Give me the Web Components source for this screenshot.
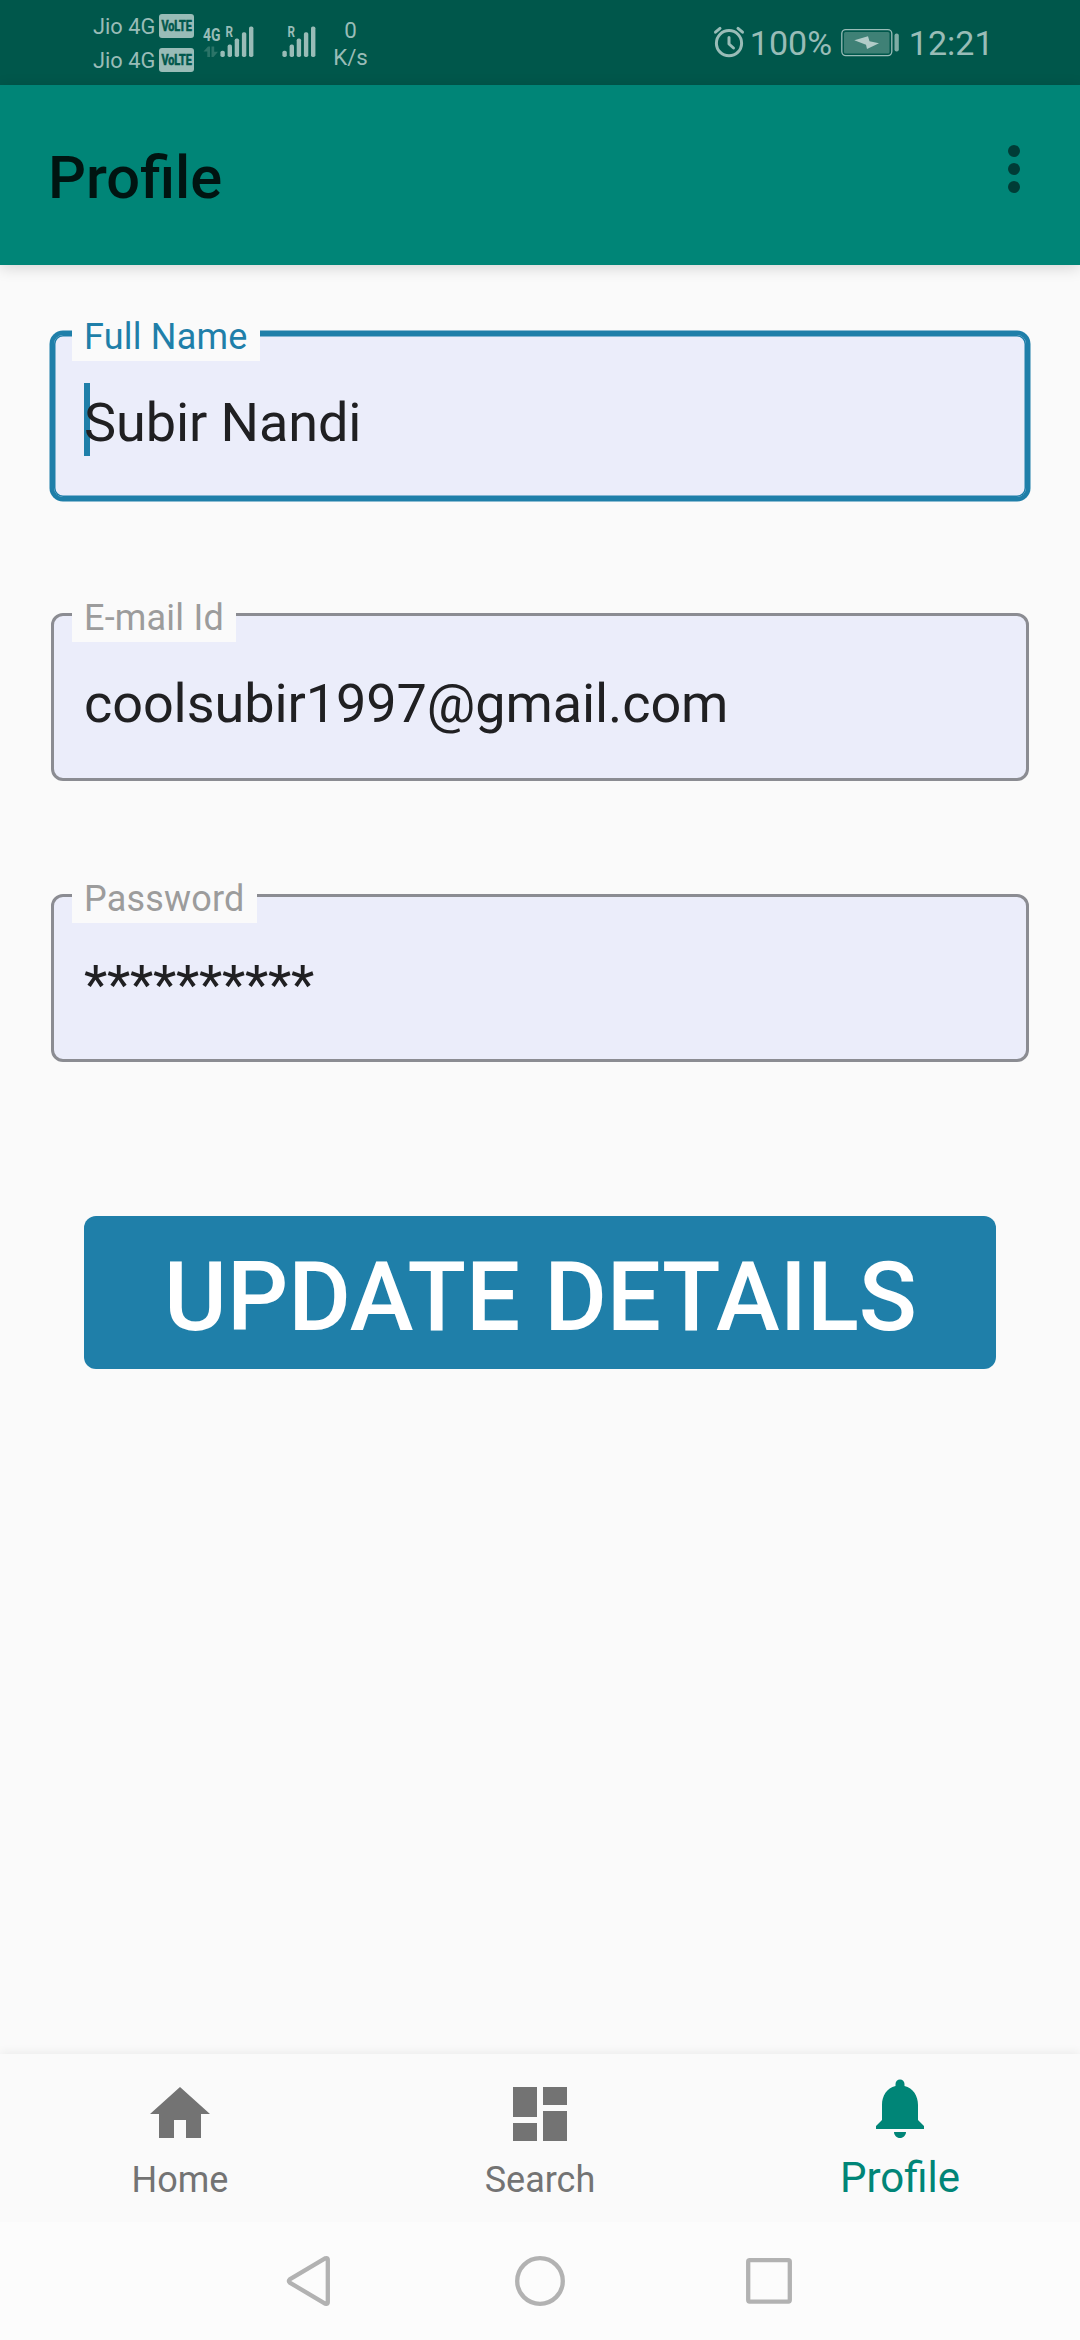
<!DOCTYPE html>
<html lang="en">
<head>
<meta charset="utf-8">
<title>Profile</title>
<style>
html,body{margin:0;padding:0}
body{width:1080px;height:2340px;overflow:hidden;background:#fafafa;font-family:Roboto,sans-serif}
</style>
</head>
<body>
<profile-screen></profile-screen>
<script>
const define = (name, html, setup) => customElements.define(name, class extends HTMLElement {
  connectedCallback() {
    if (this.shadowRoot) return;
    const root = this.attachShadow({ mode: 'open' });
    const t = document.createElement('template');
    t.innerHTML = html;
    root.append(t.content.cloneNode(true));
    if (setup) setup(this, root);
  }
});

define('signal-bars', `
<style>:host{display:block;height:85px}svg{display:block;overflow:visible}</style>
<svg width="36" height="85" viewBox="0 0 36 85" fill="#99bcb7">
  <text x="5.5" y="37" font-family="Roboto" font-weight="700" font-size="14.5" textLength="7.5" lengthAdjust="spacingAndGlyphs">R</text>
  <rect x="0.4" y="50.8" width="4.4" height="6.2" rx="1.8"/><rect x="7.6" y="44.6" width="4.4" height="12.4" rx="1.8"/>
  <rect x="14.7" y="38.5" width="4.4" height="18.5" rx="1.8"/><rect x="21.9" y="32.3" width="4.4" height="24.7" rx="1.8"/>
  <rect x="29" y="26.5" width="4.4" height="30.5" rx="1.8"/>
</svg>`);

define('volte-badge', `
<style>:host{display:block}svg{display:block;overflow:visible}</style>
<svg width="35" height="24" viewBox="0 0 35 24">
  <rect width="35" height="24" rx="3" fill="#99bcb7"/>
  <text x="2.4" y="17.2" fill="#00574b" stroke="#00574b" stroke-width=".7" font-family="Roboto" font-weight="700" font-size="15.4" textLength="30.4" lengthAdjust="spacingAndGlyphs">VoLTE</text>
</svg>`);

define('status-bar', `
<style>
:host{display:flex;justify-content:space-between;height:85px;background:#00574b;color:#99bcb7;box-sizing:border-box;padding:0 86.5px 0 93px}
svg{display:block;flex:none;overflow:visible}
.left,.right{display:flex}
.carriers{padding-top:9px}
.row{display:flex;align-items:center;height:34px;font-size:21.8px;line-height:32px}
.row span{width:66px;padding-top:2px}
.net{margin-left:8px}
.second{margin-left:26px}
.speed{margin-left:12.5px;width:40px;text-align:center;font-size:22.3px;line-height:27px;padding-top:16.6px}
.right{font-size:34px;line-height:40px;padding-top:23px;height:40px}
.right svg{margin-top:-23px}
.pct{margin-left:4px;width:89px}
.time{margin-left:10px}
</style>
<div class="left">
  <div class="carriers">
    <div class="row"><span>Jio 4G</span><volte-badge></volte-badge></div>
    <div class="row"><span>Jio 4G</span><volte-badge></volte-badge></div>
  </div>
  <svg class="net" width="18" height="85" viewBox="0 0 18 85">
    <text x="1" y="41" fill="#99bcb7" font-family="Roboto" font-weight="700" font-size="18.8" textLength="17.5" lengthAdjust="spacingAndGlyphs">4G</text>
    <path fill="#2b7468" d="M1.5 51.5 6 46.5h2V57H5.3v-5.5zM9.5 46.5h2.7v5.3H16L11.5 57h-2z"/>
  </svg>
  <signal-bars></signal-bars>
  <signal-bars class="second"></signal-bars>
  <div class="speed">0<br>K/s</div>
</div>
<div class="right">
  <svg width="34" height="85" viewBox="0 0 34 85" fill="none" stroke="#99bcb7" stroke-linecap="round">
    <circle cx="17" cy="43.2" r="12.6" stroke-width="3"/>
    <path stroke-width="3" d="M3.5 32.2 8 28.4M30.5 32.2 26 28.4"/>
    <path stroke-width="3" stroke-linejoin="round" d="M17 37.5V44l4.5 4"/>
  </svg>
  <span class="pct">100%</span>
  <svg width="60" height="85" viewBox="0 0 60 85">
    <rect x="2.8" y="29.6" width="50" height="26" rx="4" fill="none" stroke="#99bcb7" stroke-width="1.3"/>
    <rect x="5" y="32" width="45.5" height="21.5" rx="1.5" fill="#3f8176"/>
    <path fill="#b2ccc8" d="M15.3 40.3 29 36.3l1.5 4.9 9.5 2L28 49l-1-4.3z"/>
    <rect x="55.5" y="33.5" width="4.3" height="18" rx="2" fill="#7faca5"/>
  </svg>
  <span class="time">12:21</span>
</div>`);

define('app-bar', `
<style>
:host{display:flex;justify-content:space-between;height:180px;box-sizing:border-box;padding:0 60px 0 48px;background:#008577;color:#001411;box-shadow:0 3px 14px rgba(0,0,0,.15);position:relative}
h1{margin:6px 0 0;font-size:59.6px;font-weight:500;line-height:174px}
svg{display:block;margin-top:54px}
</style>
<h1><slot></slot></h1>
<svg width="12" height="60" viewBox="0 0 12 60" fill="#003c36"><circle cx="6" cy="12" r="6"/><circle cx="6" cy="30" r="6"/><circle cx="6" cy="48" r="6"/></svg>`);

define('text-field', `
<style>
:host{display:block;position:relative;box-sizing:border-box;height:168px;border:3px solid #8b8c92;border-radius:12px;background:#ebedfa;padding:10px 0 0 30px}
:host([focused]){border-color:#1f7fa9;box-shadow:0 0 0 1.5px #1f7fa9, inset 0 0 0 1.5px #1f7fa9}
.label{position:absolute;left:18px;top:-22px;height:48px;line-height:48px;padding:0 12px;background:#fafafa;color:#9c9c9c;font-size:36px;letter-spacing:.2px;white-space:nowrap}
:host([focused]) .label{color:#1f7fa9}
.value{position:relative;line-height:155px;font-size:54px;letter-spacing:-.08px;color:#202022;white-space:nowrap}
:host([masked]) .value{letter-spacing:-.25px}
.caret{display:none;position:absolute;left:30px;top:48px;width:6px;height:73px;background:#1f7fa9}
:host([focused]) .caret{display:block}
</style>
<span class="caret"></span><div class="label"></div><div class="value"><slot></slot></div>`,
(el, root) => { root.querySelector('.label').textContent = el.getAttribute('label'); });

define('action-button', `
<style>
:host{display:block;height:153px;box-sizing:border-box;padding:9px 0 0 1px;border-radius:12px;background:#1f7fa9;color:#fff;text-align:center;font-size:96px;font-weight:500;line-height:144px;white-space:nowrap}
</style><slot></slot>`);

define('nav-item', `
<style>
:host{display:flex;flex:1;flex-direction:column;align-items:center;color:#737373;font-size:36px;line-height:48px;padding-top:24px}
:host([active]){color:#008577;font-size:42px;padding-top:18px}
svg{display:block;width:72px;height:72px;fill:currentColor}
.t{margin-top:5.7px}
:host([active]) .t{margin-top:9.7px}
</style>
<svg viewBox="0 0 24 24"><path/></svg><div class="t"><slot></slot></div>`,
(el, root) => {
  const icons = {
    home: 'M10 20v-6h4v6h5v-8h3L12 3 2 12h3v8z',
    dashboard: 'M3 13h8V3H3v10zm0 8h8v-6H3v6zm10 0h8V11h-8v10zm0-18v6h8V3h-8z',
    bell: 'M12 22c1.1 0 2-.9 2-2h-4c0 1.1.89 2 2 2zm6-6v-5c0-3.07-1.64-5.64-4.5-6.32V4c0-.83-.67-1.5-1.5-1.5s-1.5.67-1.5 1.5v.68C7.63 5.36 6 7.92 6 11v5l-2 2v1h16v-1l-2-2z'
  };
  root.querySelector('path').setAttribute('d', icons[el.getAttribute('icon')]);
});

define('bottom-nav', `
<style>:host{display:flex;height:168px;background:#fafafa;box-shadow:0 -1px 10px rgba(0,0,0,.07)}</style><slot></slot>`);

define('system-nav', `
<style>
:host{display:flex;height:118px;box-sizing:border-box;background:#fcfcfc;padding:29px 284px 0 282px;justify-content:space-between;position:relative}
svg{display:block;width:54px;height:60px;fill:none;stroke:#b2b2b2;stroke-width:4.3;stroke-linejoin:round}
</style>
<svg viewBox="0 0 54 60"><path d="M7.7 28.4Q6.2 30 7.7 31.6L43.5 52.8Q46 53.5 45.8 50.8V9.2Q46 6.5 43.5 7.2Z"/></svg>
<svg viewBox="0 0 54 60"><circle cx="28" cy="30" r="22.8"/></svg>
<svg viewBox="0 0 54 60"><rect x="6.2" y="9.2" width="41.6" height="41.4" rx="1.5"/></svg>`);

define('profile-screen', `
<style>
:host{display:flex;flex-direction:column;width:1080px;height:2340px;background:#fafafa}
main{flex:1;display:flex;flex-direction:column;padding:67px 51px 0}
.fields{display:flex;flex-direction:column;gap:113px}
action-button{margin:154px 33px 0}
</style>
<status-bar></status-bar>
<app-bar>Profile</app-bar>
<main>
  <div class="fields">
    <text-field label="Full Name" focused>Subir Nandi</text-field>
    <text-field label="E-mail Id">coolsubir1997@gmail.com</text-field>
    <text-field label="Password" masked>**********</text-field>
  </div>
  <action-button>UPDATE DETAILS</action-button>
</main>
<bottom-nav>
  <nav-item icon="home">Home</nav-item>
  <nav-item icon="dashboard">Search</nav-item>
  <nav-item icon="bell" active>Profile</nav-item>
</bottom-nav>
<system-nav></system-nav>`);
</script>
</body>
</html>
